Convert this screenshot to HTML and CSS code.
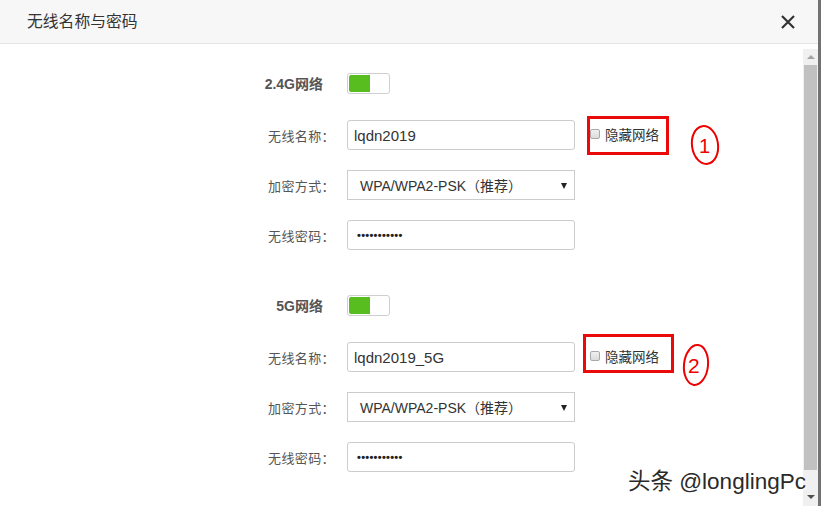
FILE: index.html
```html
<!DOCTYPE html>
<html lang="zh-CN">
<head>
<meta charset="utf-8">
<title>无线名称与密码</title>
<link rel="stylesheet" href="styles.css">
</head>
<body>
<div class="page">
  <div class="main">
    <div class="header">
      <span class="title">无线名称与密码</span>
      <svg class="close" width="14" height="14" viewBox="0 0 14 14"><path d="M1 1 L13 13 M13 1 L1 13" stroke="#333" stroke-width="2.2" fill="none"/></svg>
    </div>
    <div class="body">
      <div class="form">
        <div class="group">
          <div class="row row-toggle">
            <div class="label bold">2.4G网络</div>
            <div class="toggle"><span class="on"></span></div>
          </div>
          <div class="row">
            <div class="label">无线名称：</div>
            <div class="input">lqdn2019</div>
            <label class="check"><span class="box"></span>隐藏网络</label>
          </div>
          <div class="row">
            <div class="label">加密方式：</div>
            <div class="select">WPA/WPA2-PSK（推荐）<span class="arrow"></span></div>
          </div>
          <div class="row">
            <div class="label">无线密码：</div>
            <div class="input"><span class="dots">•••••••••••</span></div>
          </div>
        </div>
        <div class="group">
          <div class="row row-toggle">
            <div class="label bold">5G网络</div>
            <div class="toggle"><span class="on"></span></div>
          </div>
          <div class="row">
            <div class="label">无线名称：</div>
            <div class="input">lqdn2019_5G</div>
            <label class="check"><span class="box"></span>隐藏网络</label>
          </div>
          <div class="row">
            <div class="label">加密方式：</div>
            <div class="select">WPA/WPA2-PSK（推荐）<span class="arrow"></span></div>
          </div>
          <div class="row">
            <div class="label">无线密码：</div>
            <div class="input"><span class="dots">•••••••••••</span></div>
          </div>
        </div>
      </div>
      <div class="scrollbar">
        <span class="up"></span>
        <span class="thumb"></span>
        <span class="down"></span>
      </div>
    </div>
  </div>
  <div class="edge"></div>

  <div class="mark mark1"></div>
  <div class="mark mark2"></div>
  <svg class="num num1" width="36" height="44" viewBox="0 0 36 44">
    <ellipse cx="17" cy="22" rx="13" ry="19" transform="rotate(-8 17 22)" fill="none" stroke="#e00" stroke-width="2"/>
    <text x="11" y="30" font-family="Liberation Sans, Arial, sans-serif" font-size="20" fill="#e00">1</text>
  </svg>
  <svg class="num num2" width="34" height="46" viewBox="0 0 34 46">
    <ellipse cx="15" cy="23" rx="12" ry="20" transform="rotate(6 15 23)" fill="none" stroke="#e00" stroke-width="2"/>
    <text x="7" y="31" font-family="Liberation Sans, Arial, sans-serif" font-size="21" fill="#e00">2</text>
  </svg>
  <div class="watermark"><span class="wm-cn">头条</span> @longlingPc</div>
</div>
</body>
</html>
```
FILE: styles.css
```css
* { box-sizing: border-box; }
html, body { margin: 0; padding: 0; }
body {
  width: 821px;
  height: 506px;
  overflow: hidden;
  background: #fff;
  font-family: "Liberation Sans", Arial, "Noto Sans CJK SC", sans-serif;
  color: #555;
}
.page {
  position: relative;
  display: flex;
  width: 821px;
  height: 506px;
}
.main {
  width: 818px;
  display: flex;
  flex-direction: column;
}
.edge {
  width: 3px;
  background: #727272;
}
.header {
  height: 44px;
  background: #f7f7f7;
  border-bottom: 1px solid #e3e3e3;
  display: flex;
  align-items: center;
  justify-content: space-between;
  padding: 0 23px 0 27px;
}
.title {
  font-family: "Noto Sans CJK SC", sans-serif;
  font-size: 15.8px;
  color: #333;
  margin-top: -3px;
}
.close { display: block; margin-top: 1px; }
.body {
  flex: 1;
  display: flex;
}
.form {
  flex: 1;
  padding-top: 24px;
  display: flex;
  flex-direction: column;
  gap: 40px;
}
.group {
  display: flex;
  flex-direction: column;
  gap: 20px;
}
.row {
  display: flex;
  align-items: center;
  height: 30px;
}
.row-toggle { margin-bottom: 2px; }
.label {
  width: 335px;
  text-align: right;
  font-family: "Noto Sans CJK SC", sans-serif;
  font-size: 13px;
  letter-spacing: 0.4px;
  color: #555;
  margin-right: 12px;
}
.label.bold {
  font-family: "Liberation Sans", Arial, "Noto Sans CJK SC", sans-serif;
  font-weight: bold;
  font-size: 14px;
  letter-spacing: 0;
  padding-right: 12px;
  color: #555;
}
.toggle {
  width: 43px;
  height: 21px;
  border: 1px solid #cfcfcf;
  border-radius: 3px;
  background: #fff;
  padding: 1px;
  display: flex;
}
.toggle .on {
  width: 21px;
  background: #58bd1e;
  border-radius: 2px 0 0 2px;
}
.input, .select {
  width: 228px;
  height: 30px;
  border: 1px solid #cccccc;
  border-radius: 3px;
  display: flex;
  align-items: center;
  padding-left: 6px;
  font-size: 15px;
  color: #333;
}
.select {
  border-radius: 0;
  padding-left: 12px;
  font-size: 14px;
  position: relative;
  font-family: "Liberation Sans", Arial, "Noto Sans CJK SC", sans-serif;
}
.arrow {
  position: absolute;
  right: 7px;
  top: 12px;
  width: 0;
  height: 0;
  border-left: 3.5px solid transparent;
  border-right: 3.5px solid transparent;
  border-top: 6px solid #222;
}
.dots {
  font-size: 11px;
  font-weight: bold;
  letter-spacing: 0.3px;
  color: #222;
  margin-left: 3px;
}
.check {
  display: flex;
  align-items: center;
  margin-left: 15px;
  margin-bottom: 3px;
  font-family: "Noto Sans CJK SC", sans-serif;
  font-size: 13.5px;
  color: #333;
}
.box {
  width: 10px;
  height: 10px;
  border: 1px solid #a9a9a9;
  border-radius: 2px;
  background: linear-gradient(#f0f0f0, #dcdcdc);
  margin-right: 5px;
}
.scrollbar {
  width: 15px;
  margin-top: 5px;
  background: #f0f0f0;
  display: flex;
  flex-direction: column;
  align-items: center;
}
.up, .down {
  width: 0;
  height: 0;
  border-left: 4px solid transparent;
  border-right: 4px solid transparent;
}
.up { border-bottom: 4px solid #a3a3a3; margin-top: 6px; }
.down { border-top: 4px solid #505050; margin-top: 25px; }
.thumb {
  width: 13px;
  height: 405px;
  background: #c1c1c1;
  margin-top: 6px;
}
.mark {
  position: absolute;
  border: 3px solid #ea0a0a;
}
.mark1 { left: 587px; top: 116px; width: 82px; height: 39px; }
.mark2 { left: 583px; top: 334px; width: 91px; height: 39px; }
.num { position: absolute; }
.num1 { left: 688px; top: 123px; }
.num2 { left: 681px; top: 342px; }
.watermark {
  position: absolute;
  left: 628px;
  top: 463px;
  font-family: "Liberation Sans", Arial, "Noto Sans CJK SC", sans-serif;
  font-size: 22.5px;
  color: #2a2a2a;
  text-shadow: 0 0 2px #fff, 1px 1px 1px #fff;
}
.wm-cn { font-family: "Noto Sans CJK SC", sans-serif; }
```
